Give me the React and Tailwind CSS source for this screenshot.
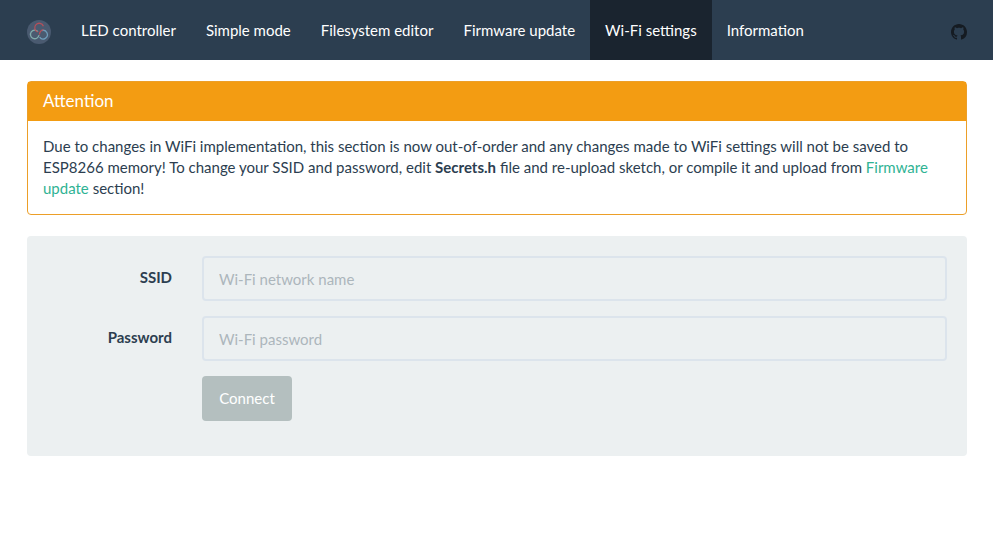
const NAV = ['LED controller', 'Simple mode', 'Filesystem editor', 'Firmware update', 'Wi-Fi settings', 'Information'];
const ACTIVE = 'Wi-Fi settings';

function Logo() {
  return (
    <svg className="h-6 w-6" viewBox="0 0 24 24" fill="none">
      <circle cx="12" cy="12" r="12" fill="#4a5a70" />
      <path d="M11 11.6A4.3 4.3 0 1 0 12 15.2" stroke="#80abab" strokeWidth="1.3" />
      <path d="M12.6 17.2A4.3 4.3 0 1 0 14.6 10.6" stroke="#6f9dbb" strokeWidth="1.3" />
      <path d="M16.4 6.2A4.5 4.5 0 1 0 10.6 12M12.4 14.6C12.6 12.4 13.6 10.4 16.4 9.6" stroke="#b4505a" strokeWidth="1.3" />
    </svg>
  );
}

function GithubMark() {
  return (
    <svg className="h-4 w-4" viewBox="0 0 16 16" fill="#151b22">
      <path d="M8 0C3.58 0 0 3.58 0 8c0 3.54 2.29 6.53 5.47 7.59.4.07.55-.17.55-.38 0-.19-.01-.82-.01-1.49-2.01.37-2.53-.49-2.69-.94-.09-.23-.48-.94-.82-1.13-.28-.15-.68-.52-.01-.53.63-.01 1.08.58 1.23.82.72 1.21 1.87.87 2.33.66.07-.52.28-.87.51-1.07-1.78-.2-3.64-.89-3.64-3.95 0-.87.31-1.59.82-2.15-.08-.2-.36-1.02.08-2.12 0 0 .67-.21 2.2.82.64-.18 1.32-.27 2-.27s1.36.09 2 .27c1.53-1.04 2.2-.82 2.2-.82.44 1.1.16 1.92.08 2.12.51.56.82 1.27.82 2.15 0 3.07-1.87 3.75-3.65 3.95.29.25.54.73.54 1.48 0 1.07-.01 1.93-.01 2.2 0 .21.15.46.55.38A8.01 8.01 0 0016 8c0-4.42-3.58-8-8-8z" />
    </svg>
  );
}

function Field({ label, placeholder, type }) {
  return (
    <label className="mb-[15px] flex h-[45px]">
      <span className="w-[145px] pt-[11px] text-right font-bold">{label}</span>
      <input
        type={type}
        placeholder={placeholder}
        className="ml-[30px] h-[45px] min-w-0 flex-1 rounded border-2 border-[#dce4ec] bg-transparent px-[15px] placeholder:text-[#acb6bc] placeholder:opacity-100"
      />
    </label>
  );
}

export default function App() {
  return (
    <div className="min-h-screen bg-white font-['Lato',sans-serif] text-[15px] leading-[21px] text-[#2c3e50]">
      <nav className="flex h-[60px] bg-[#2c3e50] px-[26px] text-white">
        <a className="ml-px mr-[15px] pt-5"><Logo /></a>
        {NAV.map((item) => (
          <a key={item} className={`px-[15px] pt-5 whitespace-nowrap ${item === ACTIVE ? 'bg-[#1a242f]' : ''}`}>
            {item}
          </a>
        ))}
        <a className="ml-auto pt-6"><GithubMark /></a>
      </nav>
      <main className="px-[26px] pt-[21px] pl-[27px]">
        <section className="mb-[21px] h-[134px] rounded border border-[#ec9f28]">
          <h3 className="h-[39px] bg-[#f39c12] px-[15px] pt-[9px] text-[17px] leading-[19px] text-white">Attention</h3>
          <p className="px-[15px] pt-[15px] leading-[21px]">
            Due to changes in WiFi implementation, this section is now out-of-order and any changes made to WiFi settings will not be saved to ESP8266 memory! To change your SSID and password, edit <b>Secrets.h</b> file and re-upload sketch, or compile it and upload from <a className="text-[#2fb394]">Firmware update</a> section!
          </p>
        </section>
        <form className="h-[220px] rounded bg-[#ecf0f1] pt-5 pr-5">
          <Field label="SSID" placeholder="Wi-Fi network name" type="text" />
          <Field label="Password" placeholder="Wi-Fi password" type="password" />
          <button type="button" disabled className="ml-[175px] h-[45px] w-[90px] rounded bg-[#b4bfbf] text-white">Connect</button>
        </form>
      </main>
    </div>
  );
}
